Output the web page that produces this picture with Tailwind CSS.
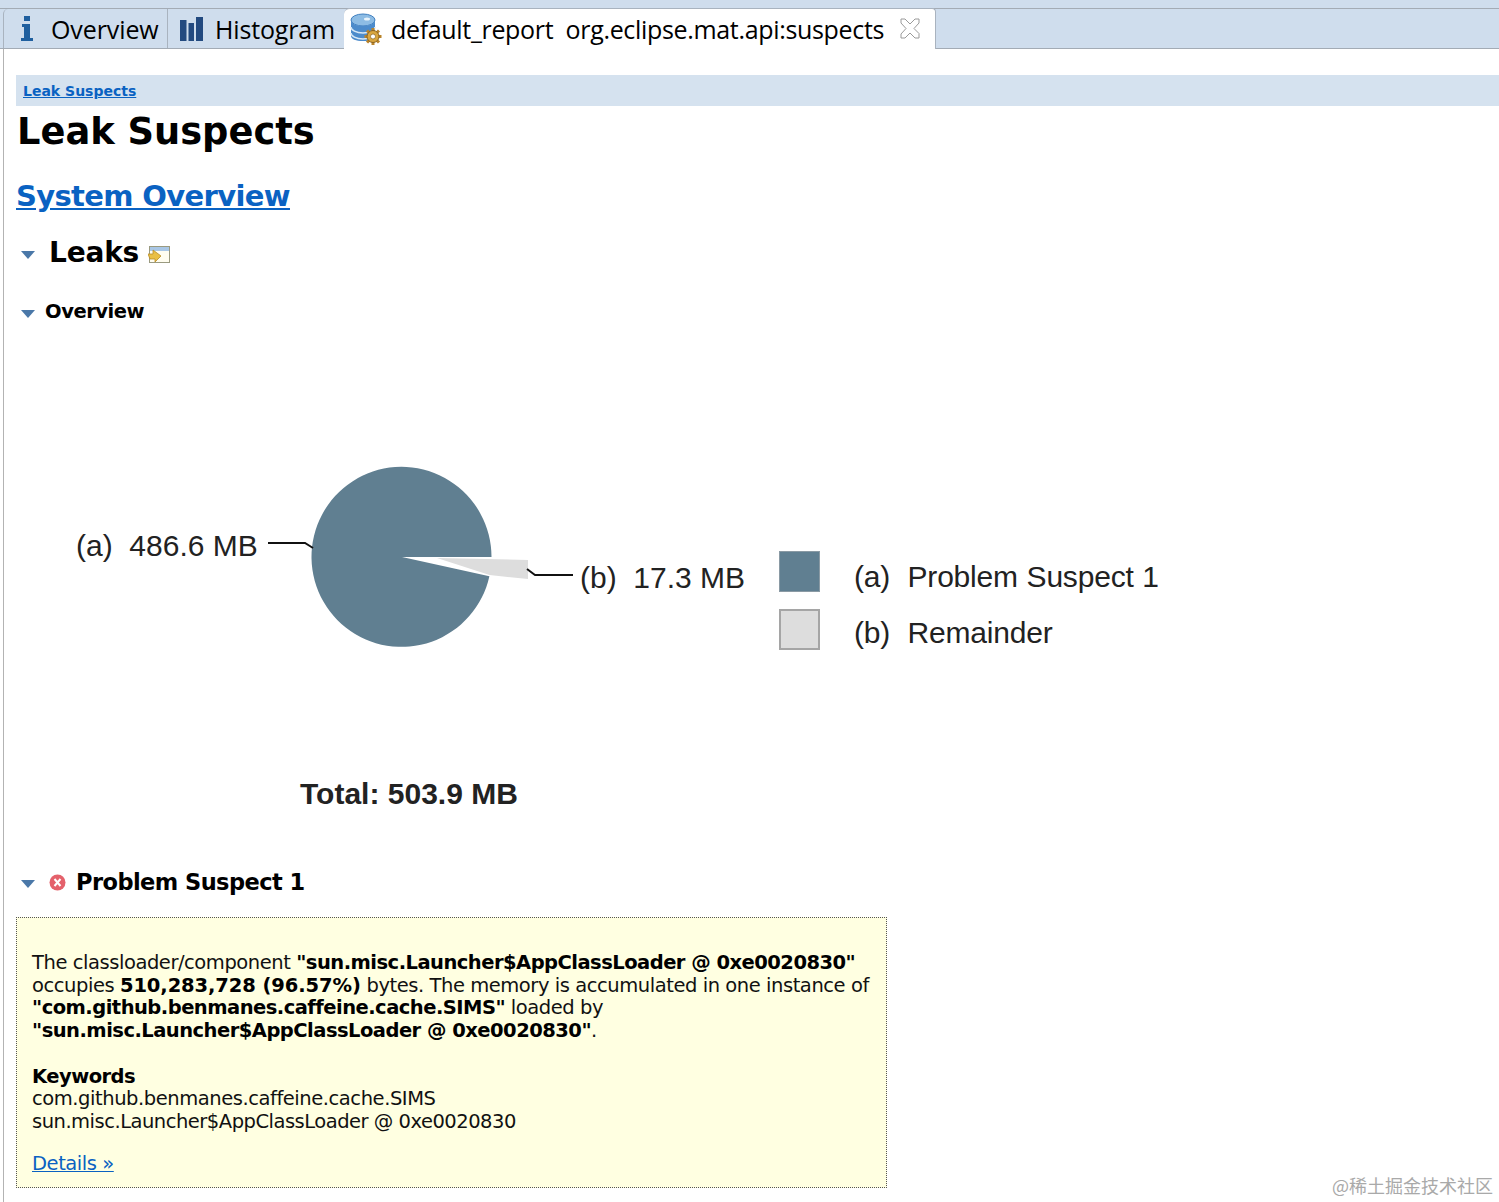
<!DOCTYPE html>
<html><head><meta charset="utf-8"><title>Leak Suspects</title>
<script src="https://cdn.jsdelivr.net/npm/@tailwindcss/browser@4"></script></head>
<body class="bg-white overflow-hidden">
<div class="relative w-[1499px] h-[1202px] overflow-hidden font-['Liberation_Sans',sans-serif] text-black">
  <div class="h-[49px] bg-[#cfdded] pt-[8px]">
    <div class="flex h-[41px] border-t border-b border-[#a3abb5] pl-[3px] font-['Open_Sans',sans-serif] text-[25px] leading-[40px]">
      <div class="w-[165px] h-[39px] flex items-center border-l border-r border-[#a9b3bf] rounded-tl-[5px] tracking-[-0.1px]">
        <svg class="ml-[15px] w-[16px] h-[26px]" viewBox="0 0 16 26"><path d="M5 0h6v5H5zM3 8h8v14h3v3H2v-3h3V11H3z" fill="#1f5f9f"/></svg>
        <span class="ml-[16px]">Overview</span>
      </div>
      <div class="w-[176px] h-[39px] flex items-center tracking-[-0.15px]">
        <svg class="ml-[12px] w-[23px] h-[24px]" viewBox="0 0 23 24"><path d="M0 3h6.500v21H0zM8.500 6H14v18H8.500zM16 0h7v24h-7z" fill="#234a80"/></svg>
        <span class="ml-[12px]">Histogram</span>
      </div>
      <div class="relative w-[592px] h-[41px] -mt-[1px] flex items-center bg-white border-t border-r border-[#a9b3bf] rounded-tl-[6px] rounded-tr-[4px] tracking-[-0.33px]">
        <svg class="ml-[6px] w-[33px] h-[33px]" viewBox="0 0 33 33">
          <ellipse cx="13" cy="7" rx="12" ry="6" fill="#8dbce4" stroke="#3f7fc0"/>
          <path d="M1 7v16c0 3 5 5 12 5s12-2 12-5V7c0 3-5 6-12 6S1 10 1 7z" fill="#4c8bcb"/>
          <path d="M1 14c0 3 5 6 12 6s12-3 12-6M1 20c0 3 5 6 12 6s12-3 12-6" fill="none" stroke="#d7e8f6" stroke-width="1.500"/>
          <ellipse cx="17" cy="6" rx="3" ry="1.500" fill="#e8f3fb"/>
          <path d="M23 15v17M14.500 23.500h17M17 17.500l12 12M29 17.500l-12 12" stroke="#b9832a" stroke-width="3"/>
          <circle cx="23" cy="23.500" r="6" fill="#d9a640" stroke="#8a6320"/>
          <circle cx="23" cy="23.500" r="2.500" fill="#fff" stroke="#8a6320" stroke-width=".7"/>
        </svg>
        <span class="ml-[8px] whitespace-pre">default_report  org.eclipse.mat.api:suspects</span>
        <svg class="absolute left-[555px] top-[9px] w-[22px] h-[21px]" viewBox="0 0 22 21"><path d="M2 1h4l5 5 5-5h4v4l-5 5.500 5 5V20h-4l-5-5-5 5H2v-4l5-5.500-5-5.500z" fill="#fff" stroke="#9a9a9a"/></svg>
      </div>
    </div>
  </div>
  <div class="absolute left-[3px] top-[49px] bottom-0 w-[1px] bg-[#b3b3b3]"></div>

  <main class="pl-[16px] pt-[26px] font-['DejaVu_Sans',sans-serif]">
    <div class="h-[31px] bg-[#d5e2ef] pl-[7px] pt-[6px] text-[14px] leading-[20px] font-bold">
      <a class="text-[#0a62c2] underline">Leak Suspects</a>
    </div>
    <h1 class="ml-[1px] mt-[1px] h-[51px] text-[36.800px] leading-[50px] font-bold">Leak Suspects</h1>
    <h2 class="mt-[21px] h-[34px] text-[29px] leading-[34px] font-bold tracking-[-0.65px]"><a class="text-[#0a62c2] underline">System Overview</a></h2>
    <div class="mt-[23px] h-[34px] flex items-center">
      <svg class="ml-[5px] mt-[3px] w-[14px] h-[8px]" viewBox="0 0 14 8"><path d="M0 0h14L7 8z" fill="#4a78a8"/></svg>
      <h2 class="ml-[14px] text-[28px] leading-[34px] font-bold tracking-[-0.2px]">Leaks</h2>
      <svg class="ml-[9px] mt-[3px] w-[22px] h-[17px]" viewBox="0 0 22 17"><rect x="1.500" y=".5" width="20" height="16" fill="#fffdf0" stroke="#9a9a80"/><rect x="2" y="1" width="19" height="4" fill="#a9c7e6"/><path d="M0 8h5V4l8 6-6 6v-3H2z" fill="#e9bf45" stroke="#b98d2a" stroke-width=".8"/></svg>
    </div>
    <div class="mt-[30px] h-[24px] flex items-center">
      <svg class="ml-[5px] mt-[3px] w-[14px] h-[8px]" viewBox="0 0 14 8"><path d="M0 0h14L7 8z" fill="#4a78a8"/></svg>
      <h3 class="ml-[10px] text-[19.500px] leading-[24px] font-bold tracking-[-0.45px]">Overview</h3>
    </div>

    <div class="relative h-[546px] font-['Liberation_Sans',sans-serif]">
      <svg class="absolute left-[244px] top-[126px] w-[340px] h-[210px]" viewBox="260 450 340 210">
        <path d="M402 557H491.500A90 90 0 1 0 489.400 576.200Z" fill="#607f91"/>
        <path d="M437 558L528 560V579L489.500 575Z" fill="#dddddd"/>
        <path d="M268 543H305L313 548" fill="none" stroke="#111" stroke-width="2"/>
        <path d="M527 569L535 575H573" fill="none" stroke="#111" stroke-width="2"/>
      </svg>
      <span class="absolute left-[60px] top-[204px] text-[30px] leading-[36px] whitespace-pre text-[#222]">(a)  486.6 MB</span>
      <span class="absolute left-[564px] top-[236px] text-[30px] leading-[36px] whitespace-pre text-[#222]">(b)  17.3 MB</span>
      <div class="absolute left-[763px] top-[227px] w-[41px] h-[41px] bg-[#607f91] border border-[#8a9aa4]"></div>
      <div class="absolute left-[763px] top-[285px] w-[41px] h-[41px] bg-[#dddddd] border-2 border-[#a5a5a5]"></div>
      <span class="absolute left-[838px] top-[235px] text-[30px] leading-[36px] tracking-[-0.2px] [word-spacing:0.6px] whitespace-pre text-[#222]">(a)  Problem Suspect 1</span>
      <span class="absolute left-[838px] top-[291px] text-[30px] leading-[36px] tracking-[-0.2px] [word-spacing:0.6px] whitespace-pre text-[#222]">(b)  Remainder</span>
      <span class="absolute left-[284px] top-[452px] text-[30px] leading-[36px] font-bold text-[#222] whitespace-pre">Total: 503.9 MB</span>
    </div>

    <div class="h-[24px] flex items-center">
      <svg class="ml-[5px] mt-[3px] w-[14px] h-[8px]" viewBox="0 0 14 8"><path d="M0 0h14L7 8z" fill="#4a78a8"/></svg>
      <svg class="ml-[14px] mt-[1px] w-[17px] h-[17px]" viewBox="0 0 17 17"><circle cx="8.500" cy="8.500" r="8" fill="#e4616b"/><path d="M5.500 5l6 7M11.500 5l-6 7" stroke="#fff" stroke-width="2"/></svg>
      <h3 class="ml-[10px] text-[22.500px] leading-[24px] font-bold tracking-[-0.55px]">Problem Suspect 1</h3>
    </div>
    <div class="mt-[23px] w-[871px] h-[271px] bg-[#ffffe1] border border-dotted border-[#555] pl-[15px] pt-[34px] text-[19.500px] leading-[22.700px] tracking-[-0.44px] text-[#111] whitespace-nowrap">
      <p>The classloader/component <b class="text-black tracking-[-0.52px]">"sun.misc.Launcher$AppClassLoader @ 0xe0020830"</b><br>occupies <b class="text-black tracking-[-0.1px]">510,283,728 (96.57%)</b> bytes. The memory is accumulated in one instance of<br><b class="text-black tracking-[-0.52px]">"com.github.benmanes.caffeine.cache.SIMS"</b> loaded by<br><b class="text-black tracking-[-0.52px]">"sun.misc.Launcher$AppClassLoader @ 0xe0020830"</b>.</p>
      <p class="mt-[22.700px]"><b class="text-black tracking-[-0.52px]">Keywords</b><br>com.github.benmanes.caffeine.cache.SIMS<br><span class="tracking-[-0.49px]">sun.misc.Launcher$AppClassLoader @ 0xe0020830</span></p>
      <p class="mt-[19px]"><a class="text-[#0a62c2] underline">Details »</a></p>
    </div>
  </main>
  <span class="absolute left-[1332px] top-[1174px] text-[18px] leading-[22px] text-[#a9a9a9] font-['Noto_Sans_CJK_SC',sans-serif] whitespace-pre">@稀土掘金技术社区</span>
</div>
</body></html>
